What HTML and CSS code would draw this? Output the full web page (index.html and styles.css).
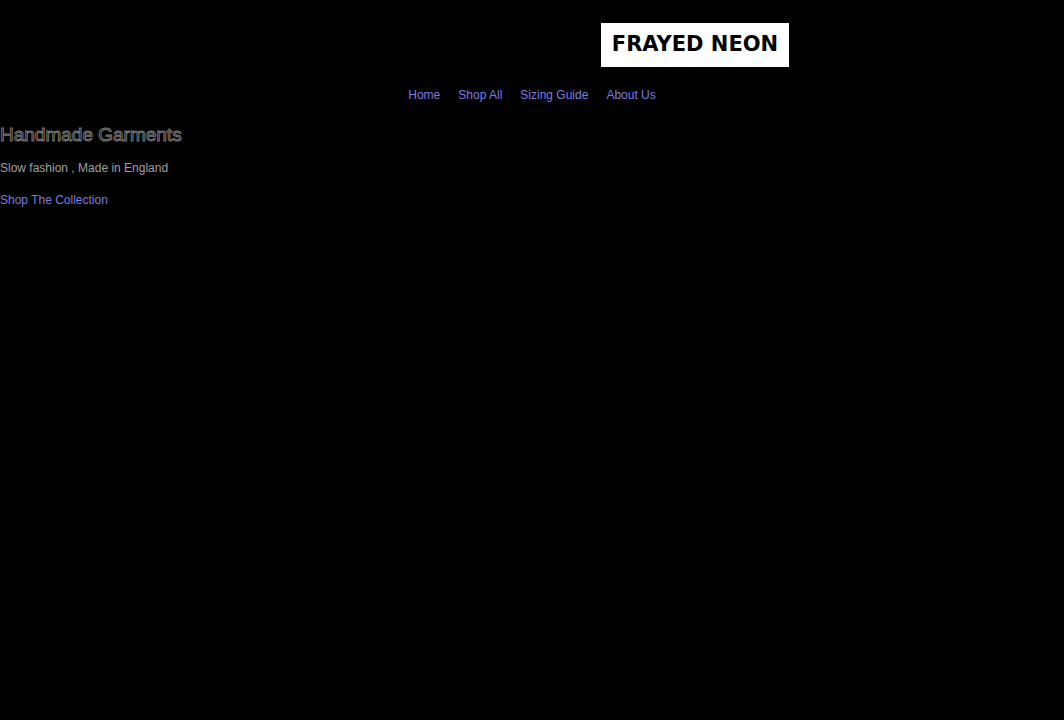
FILE: index.html
```html
<!DOCTYPE html>
<html lang="en">
<head>
    <meta charset="UTF-8">
    <meta name="viewport" content="width=device-width, initial-scale=1.0">
    <title>Frayed Neon</title>
    <link rel="stylesheet" href="styles.css">
</head>
<body>
    <header>
        <div class="logo">FRAYED NEON</div>
        <nav>
            <a href="#">Home</a>
            <a href="#">Shop All</a>
            <a href="#">Sizing Guide</a>
            <a href="#">About Us</a>
        </nav>
    </header>

    <main class="hero">
        <h1>Handmade Garments</h1>
        <p>Slow fashion , Made in England</p>
        <a href="#">Shop The Collection</a>
    </main>
</body>
</html>
```
FILE: styles.css
```css
body {
    margin: 0;
    background: #000;
    color: #a0a0a0;
    font-family: "Liberation Sans", Arial, sans-serif;
    font-size: 12px;
    line-height: 16px;
}

a {
    color: #7c7ce0;
    text-decoration: none;
}

/* Header */
header {
    display: grid;
    grid-template-columns: 1fr 1fr;
    row-gap: 20px;
    padding-top: 23px;
}

.logo {
    grid-column: 2;
    width: 188px;
    height: 44px;
    margin-left: 69px;
    background: #fff;
    color: #000;
    font-family: "DejaVu Sans", Verdana, sans-serif;
    font-size: 21px;
    font-weight: bold;
    line-height: 42px;
    text-align: center;
}

nav {
    grid-column: 1 / 3;
    display: flex;
    justify-content: center;
    gap: 18px;
}

/* Intro */
.hero {
    padding-top: 20px;
}

/* Hollow lettering */
h1 {
    margin: 0 0 13px;
    font-size: 19px;
    font-weight: normal;
    line-height: 24px;
    color: #000;
    -webkit-text-stroke: 1px #777;
}

.hero p {
    margin: 0 0 16px;
}
```
